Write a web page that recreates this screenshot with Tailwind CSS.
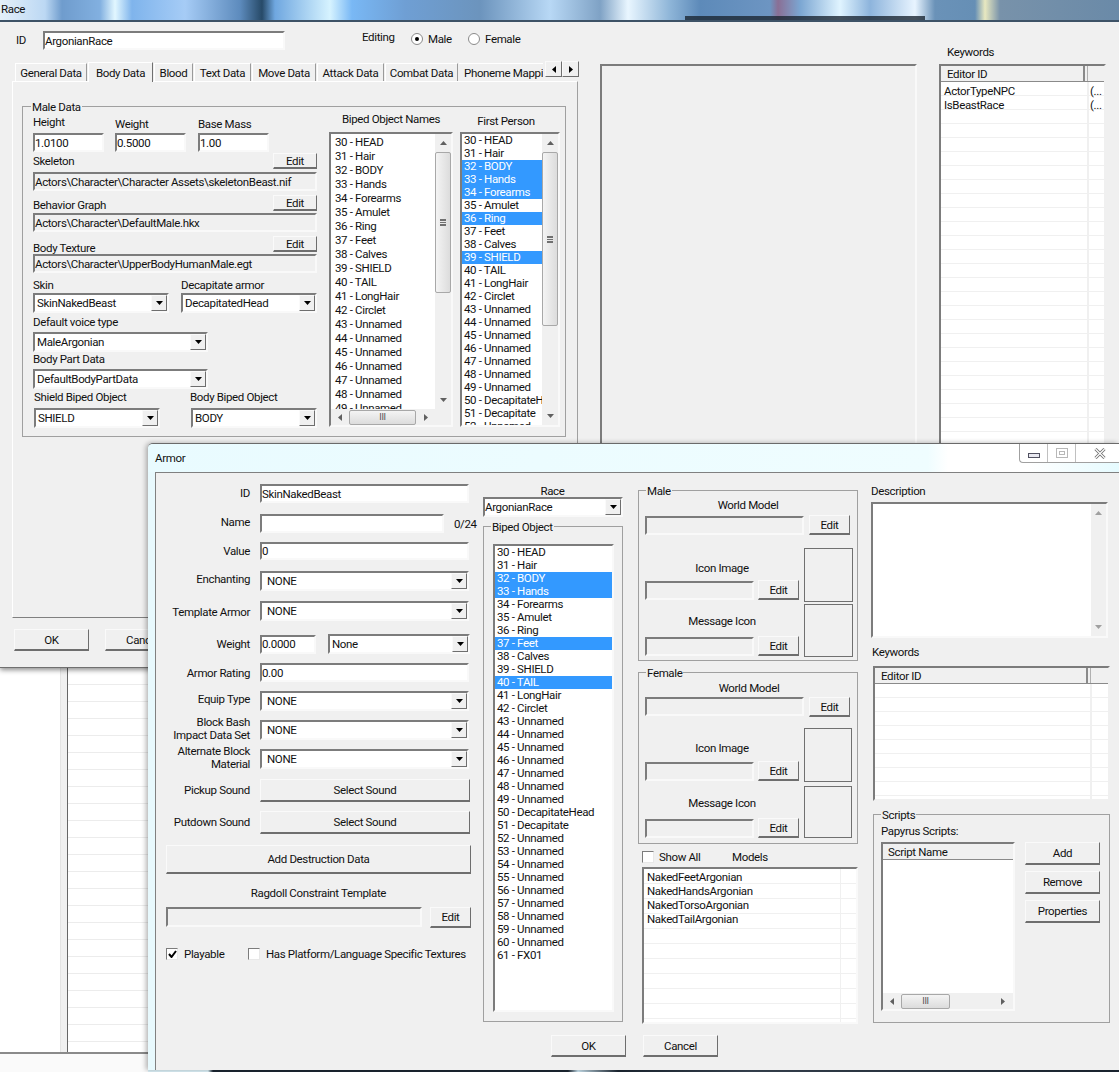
<!DOCTYPE html>
<html lang="en">
<head>
<meta charset="UTF-8">
<title>Race / Armor</title>
<script src="https://cdn.jsdelivr.net/npm/@tailwindcss/browser@4"></script>
</head>
<body class="bg-white">
<div class="relative w-[1119px] h-[1072px] overflow-hidden whitespace-nowrap bg-white text-[11.5px] tracking-[-0.35px] leading-[12px] text-[#111111] font-['Roboto','Liberation_Sans',Arial,sans-serif]">

  <!-- list window behind both dialogs -->
  <div class="absolute left-0 top-[668px] w-[148px] h-[404px] flex flex-col">
    <div class="flex h-[386px] border-b-2 border-[#8a8a8a]">
      <div class="w-[60px] bg-white"></div>
      <div class="w-[7px] bg-[#f0f0f0] border-l border-[#e4e4e4]"></div>
      <div class="flex-1 border-l border-[#666666] bg-[repeating-linear-gradient(180deg,#ffffff_0px,#ffffff_16px,#ececec_16px,#ececec_17px)]"></div>
    </div>
    <div class="flex-1 bg-[#fafafa]"></div>
  </div>
  <div class="absolute left-[148px] right-0 bottom-0 h-[2px] bg-[linear-gradient(90deg,#dff4fb_0px,#dff4fb_60px,#1c2733_65px,#1c2733_420px,#cfe8f5_430px,#1c2733_470px,#3a4654_600px,#1c2733_971px)]"></div>

  <!-- Race window -->
  <div class="absolute left-0 top-0 w-[1119px] h-[668px] bg-[#f0f0f0] border-b border-[#707070] shadow-[0_2px_5px_rgba(0,0,0,0.45)]">
    <div class="relative h-[22px] pl-px leading-[19px] border-b-2 border-[#3d5266] bg-[linear-gradient(90deg,#e4f0fa_0px,#bcd8f3_45px,#6f9ccd_62px,#82b0e0_100px,#e2f7ff_115px,#7fb4ec_132px,#a6ccf6_185px,#5d8bbd_240px,#274a68_262px,#6fa7e0_275px,#d6f3ff_330px,#79b8f5_352px,#6f9fd4_405px,#6c94bd_480px,#b8d8f5_550px,#7fa2c5_600px,#e9f6ff_628px,#8eb5d8_670px,#5d8ab9_700px,#6d95c2_770px,#8a6f95_778px,#7ba6d2_800px,#e0f4ff_840px,#8db4dc_870px,#e8f4ff_915px,#6a92b8_935px,#668fb5_975px,#e8e8c0_985px,#7892aa_1000px,#6a8aa8_1119px)]">
      Race
      <div class="absolute left-[685px] top-[16px] w-[240px] h-[4px] bg-[#1c2733]/80"></div>
    </div>
    <div class="flex">
      <!-- left part: header, tabs, buttons -->
      <div class="w-[600px] shrink-0">
        <div class="flex items-start pt-[9px] pl-[16px]">
          <span class="w-[27px] mt-[3px]">ID</span>
          <div class="w-[242px] h-[19px] flex items-center bg-white border-2 border-t-[#7c7c7c] border-l-[#7c7c7c] border-r-[#f9f9f9] border-b-[#f9f9f9]">ArgonianRace</div>
          <span class="ml-[77px] w-[49px]">Editing</span>
          <span class="mt-[2px] w-[12px] h-[12px] rounded-full bg-white border border-[#8a8a8a] flex items-center justify-center"><span class="w-[4px] h-[4px] rounded-full bg-black"></span></span>
          <span class="ml-[5px] mt-[2px] w-[40px]">Male</span>
          <span class="mt-[2px] w-[12px] h-[12px] rounded-full bg-white border border-[#8a8a8a]"></span>
          <span class="ml-[5px] mt-[2px]">Female</span>
        </div>

        <!-- tabs -->
        <div class="relative flex items-end h-[20px] mt-[11px] pl-[15px] gap-px">
          <div class="w-[72px] h-[18px] flex items-center justify-center border border-b-0 border-t-white border-l-white border-r-[#9a9a9a]">General Data</div>
          <div class="w-[65px] h-[20px] -mb-px z-10 flex items-center justify-center bg-[#f0f0f0] border border-b-0 border-t-white border-l-white border-r-[#707070]">Body Data</div>
          <div class="w-[39px] h-[18px] flex items-center justify-center border border-b-0 border-t-white border-l-white border-r-[#9a9a9a]">Blood</div>
          <div class="w-[57px] h-[18px] flex items-center justify-center border border-b-0 border-t-white border-l-white border-r-[#9a9a9a]">Text Data</div>
          <div class="w-[64px] h-[18px] flex items-center justify-center border border-b-0 border-t-white border-l-white border-r-[#9a9a9a]">Move Data</div>
          <div class="w-[67px] h-[18px] flex items-center justify-center border border-b-0 border-t-white border-l-white border-r-[#9a9a9a]">Attack Data</div>
          <div class="w-[73px] h-[18px] flex items-center justify-center border border-b-0 border-t-white border-l-white border-r-[#9a9a9a]">Combat Data</div>
          <div class="w-[84px] h-[18px] pl-[5px] flex items-center overflow-hidden border-t border-white">Phoneme Mapping</div>
          <div class="absolute left-[545px] top-0 flex">
            <span class="w-[17px] h-[16px] flex items-center justify-center bg-[#f0f0f0] border border-t-[#fafafa] border-l-[#fafafa] border-r-[#6e6e6e] border-b-[#6e6e6e]"><svg class="w-[4px] h-[7px]" viewBox="0 0 4 7"><path d="M4 0v7L0 3.5z"/></svg></span>
            <span class="w-[17px] h-[16px] flex items-center justify-center bg-[#f0f0f0] border border-t-[#fafafa] border-l-[#fafafa] border-r-[#6e6e6e] border-b-[#6e6e6e]"><svg class="w-[4px] h-[7px]" viewBox="0 0 4 7"><path d="M0 0v7l4-3.5z"/></svg></span>
          </div>
        </div>

        <!-- tab panel -->
        <div class="ml-[12px] w-[566px] h-[537px] pt-[24px] pl-[9px] border border-t-white border-l-white border-r-[#a0a0a0] border-b-[#808080]">
          <div class="relative flex w-[544px] h-[331px] border border-[#a0a0a0]">
            <span class="absolute left-[8px] -top-[6px] px-px bg-[#f0f0f0]">Male Data</span>

            <!-- data fields -->
            <div class="w-[306px] shrink-0 pl-[10px]">
              <div class="flex h-[24px] items-end">
                <span class="w-[82px] mb-[3px]">Height</span>
                <span class="w-[83px] mb-px">Weight</span>
                <span class="mb-px">Base Mass</span>
              </div>
              <div class="flex mt-[2px]">
                <div class="w-[71px] h-[19px] flex items-center bg-white border-2 border-t-[#7c7c7c] border-l-[#7c7c7c] border-r-[#f9f9f9] border-b-[#f9f9f9]">1.0100</div>
                <div class="w-[71px] h-[19px] ml-[11px] flex items-center bg-white border-2 border-t-[#7c7c7c] border-l-[#7c7c7c] border-r-[#f9f9f9] border-b-[#f9f9f9]">0.5000</div>
                <div class="w-[71px] h-[19px] ml-[12px] flex items-center bg-white border-2 border-t-[#7c7c7c] border-l-[#7c7c7c] border-r-[#f9f9f9] border-b-[#f9f9f9]">1.00</div>
              </div>
              <div class="flex justify-between items-end w-[284px] mt-px">
                <span class="mb-[2px]">Skeleton</span>
                <span class="w-[44px] h-[16px] flex items-center justify-center border border-b-2 border-t-[#fafafa] border-l-[#fafafa] border-r-[#6e6e6e] border-b-[#6e6e6e]">Edit</span>
              </div>
              <div class="w-[284px] h-[19px] mt-[3px] flex items-center border-2 border-t-[#7c7c7c] border-l-[#7c7c7c] border-r-[#f9f9f9] border-b-[#f9f9f9]">Actors\Character\Character Assets\skeletonBeast.nif</div>
              <div class="flex justify-between items-end w-[284px] mt-[4px]">
                <span>Behavior Graph</span>
                <span class="w-[44px] h-[16px] flex items-center justify-center border border-b-2 border-t-[#fafafa] border-l-[#fafafa] border-r-[#6e6e6e] border-b-[#6e6e6e]">Edit</span>
              </div>
              <div class="w-[284px] h-[19px] mt-[2px] flex items-center border-2 border-t-[#7c7c7c] border-l-[#7c7c7c] border-r-[#f9f9f9] border-b-[#f9f9f9]">Actors\Character\DefaultMale.hkx</div>
              <div class="flex justify-between w-[284px] mt-[4px] h-[16px]">
                <span class="mt-[6px]">Body Texture</span>
                <span class="w-[44px] h-[16px] flex items-center justify-center border border-b-2 border-t-[#fafafa] border-l-[#fafafa] border-r-[#6e6e6e] border-b-[#6e6e6e]">Edit</span>
              </div>
              <div class="w-[284px] h-[19px] mt-[2px] flex items-center border-2 border-t-[#7c7c7c] border-l-[#7c7c7c] border-r-[#f9f9f9] border-b-[#f9f9f9]">Actors\Character\UpperBodyHumanMale.egt</div>
              <div class="flex mt-[6px] mb-[2px]">
                <span class="w-[148px]">Skin</span>
                <span>Decapitate armor</span>
              </div>
              <div class="flex gap-[12px]">
                <div class="w-[136px] h-[20px] flex items-center pl-[2px] bg-white border-2 border-t-[#7c7c7c] border-l-[#7c7c7c] border-r-[#f9f9f9] border-b-[#f9f9f9]"><span class="flex-1">SkinNakedBeast</span><span class="w-[16px] h-[16px] flex items-center justify-center bg-[#f0f0f0] border border-t-[#fafafa] border-l-[#fafafa] border-r-[#6e6e6e] border-b-[#6e6e6e]"><svg class="w-[7px] h-[4px]" viewBox="0 0 7 4"><path d="M0 0h7L3.5 4z"/></svg></span></div>
                <div class="w-[136px] h-[20px] flex items-center pl-[2px] bg-white border-2 border-t-[#7c7c7c] border-l-[#7c7c7c] border-r-[#f9f9f9] border-b-[#f9f9f9]"><span class="flex-1">DecapitatedHead</span><span class="w-[16px] h-[16px] flex items-center justify-center bg-[#f0f0f0] border border-t-[#fafafa] border-l-[#fafafa] border-r-[#6e6e6e] border-b-[#6e6e6e]"><svg class="w-[7px] h-[4px]" viewBox="0 0 7 4"><path d="M0 0h7L3.5 4z"/></svg></span></div>
              </div>
              <div class="mt-[3px]">Default voice type</div>
              <div class="w-[175px] h-[20px] mt-[4px] flex items-center pl-[2px] bg-white border-2 border-t-[#7c7c7c] border-l-[#7c7c7c] border-r-[#f9f9f9] border-b-[#f9f9f9]"><span class="flex-1">MaleArgonian</span><span class="w-[16px] h-[16px] flex items-center justify-center bg-[#f0f0f0] border border-t-[#fafafa] border-l-[#fafafa] border-r-[#6e6e6e] border-b-[#6e6e6e]"><svg class="w-[7px] h-[4px]" viewBox="0 0 7 4"><path d="M0 0h7L3.5 4z"/></svg></span></div>
              <div class="mt-px">Body Part Data</div>
              <div class="w-[175px] h-[20px] mt-[4px] flex items-center pl-[2px] bg-white border-2 border-t-[#7c7c7c] border-l-[#7c7c7c] border-r-[#f9f9f9] border-b-[#f9f9f9]"><span class="flex-1">DefaultBodyPartData</span><span class="w-[16px] h-[16px] flex items-center justify-center bg-[#f0f0f0] border border-t-[#fafafa] border-l-[#fafafa] border-r-[#6e6e6e] border-b-[#6e6e6e]"><svg class="w-[7px] h-[4px]" viewBox="0 0 7 4"><path d="M0 0h7L3.5 4z"/></svg></span></div>
              <div class="flex mt-[2px] ml-px">
                <span class="w-[156px]">Shield Biped Object</span>
                <span>Body Biped Object</span>
              </div>
              <div class="flex gap-[31px] mt-[5px] ml-px">
                <div class="w-[126px] h-[20px] flex items-center pl-[2px] bg-white border-2 border-t-[#7c7c7c] border-l-[#7c7c7c] border-r-[#f9f9f9] border-b-[#f9f9f9]"><span class="flex-1">SHIELD</span><span class="w-[16px] h-[16px] flex items-center justify-center bg-[#f0f0f0] border border-t-[#fafafa] border-l-[#fafafa] border-r-[#6e6e6e] border-b-[#6e6e6e]"><svg class="w-[7px] h-[4px]" viewBox="0 0 7 4"><path d="M0 0h7L3.5 4z"/></svg></span></div>
                <div class="w-[126px] h-[20px] flex items-center pl-[2px] bg-white border-2 border-t-[#7c7c7c] border-l-[#7c7c7c] border-r-[#f9f9f9] border-b-[#f9f9f9]"><span class="flex-1">BODY</span><span class="w-[16px] h-[16px] flex items-center justify-center bg-[#f0f0f0] border border-t-[#fafafa] border-l-[#fafafa] border-r-[#6e6e6e] border-b-[#6e6e6e]"><svg class="w-[7px] h-[4px]" viewBox="0 0 7 4"><path d="M0 0h7L3.5 4z"/></svg></span></div>
              </div>
            </div>

            <!-- Biped Object Names -->
            <div class="w-[124px] shrink-0 pt-[6px]">
              <div class="text-center">Biped Object Names</div>
              <div class="flex flex-col h-[295px] mt-[7px] bg-white border-2 border-t-[#7c7c7c] border-l-[#7c7c7c] border-r-[#f9f9f9] border-b-[#f9f9f9]">
                <div class="flex h-[275px]">
                  <div class="flex-1 overflow-hidden pt-px pl-[4px] leading-[14px]">
                    <div>30 - HEAD</div><div>31 - Hair</div><div>32 - BODY</div><div>33 - Hands</div><div>34 - Forearms</div><div>35 - Amulet</div><div>36 - Ring</div><div>37 - Feet</div><div>38 - Calves</div><div>39 - SHIELD</div><div>40 - TAIL</div><div>41 - LongHair</div><div>42 - Circlet</div><div>43 - Unnamed</div><div>44 - Unnamed</div><div>45 - Unnamed</div><div>46 - Unnamed</div><div>47 - Unnamed</div><div>48 - Unnamed</div><div>49 - Unnamed</div>
                  </div>
                  <div class="w-[16px] flex flex-col bg-[#f0f0f0]">
                    <div class="h-[18px] flex items-center justify-center"><svg class="w-[7px] h-[4px]" viewBox="0 0 7 4"><path fill="#606060" d="M3.5 0L7 4H0z"/></svg></div>
                    <div class="h-[141px] flex items-center justify-center bg-[linear-gradient(90deg,#f4f4f4,#dcdcdc)] border border-[#a8a8a8] rounded-[2px]"><span class="w-[6px] h-[7px] border-y-2 border-[#707070] flex items-center"><span class="w-full h-px bg-[#707070]"></span></span></div>
                    <div class="flex-1"></div>
                    <div class="h-[18px] flex items-center justify-center"><svg class="w-[7px] h-[4px]" viewBox="0 0 7 4"><path fill="#606060" d="M0 0h7L3.5 4z"/></svg></div>
                  </div>
                </div>
                <div class="flex flex-1 items-center bg-[#f0f0f0] pr-[16px]">
                  <div class="w-[18px] flex justify-center"><svg class="w-[4px] h-[7px]" viewBox="0 0 4 7"><path fill="#606060" d="M4 0v7L0 3.5z"/></svg></div>
                  <div class="w-[67px] h-[15px] flex items-center justify-center bg-[linear-gradient(180deg,#f4f4f4,#dcdcdc)] border border-[#a8a8a8] rounded-[2px] text-[9px] text-[#555555]">III</div>
                  <div class="flex-1 flex justify-center"><svg class="w-[4px] h-[7px]" viewBox="0 0 4 7"><path fill="#606060" d="M0 0v7l4-3.5z"/></svg></div>
                </div>
              </div>
            </div>

            <!-- First Person -->
            <div class="w-[100px] shrink-0 ml-[7px] pt-[8px]">
              <div class="text-center pr-[8px]">First Person</div>
              <div class="flex h-[295px] mt-[5px] bg-white border-2 border-t-[#7c7c7c] border-l-[#7c7c7c] border-r-[#f9f9f9] border-b-[#f9f9f9]">
                <div class="flex-1 overflow-hidden leading-[13px]">
                  <div class="pl-[2px]">30 - HEAD</div><div class="pl-[2px]">31 - Hair</div>
                  <div class="pl-[2px] bg-[#3399ff] text-white">32 - BODY</div><div class="pl-[2px] bg-[#3399ff] text-white">33 - Hands</div><div class="pl-[2px] bg-[#3399ff] text-white">34 - Forearms</div>
                  <div class="pl-[2px]">35 - Amulet</div>
                  <div class="pl-[2px] bg-[#3399ff] text-white">36 - Ring</div>
                  <div class="pl-[2px]">37 - Feet</div><div class="pl-[2px]">38 - Calves</div>
                  <div class="pl-[2px] bg-[#3399ff] text-white">39 - SHIELD</div>
                  <div class="pl-[2px]">40 - TAIL</div><div class="pl-[2px]">41 - LongHair</div><div class="pl-[2px]">42 - Circlet</div><div class="pl-[2px]">43 - Unnamed</div><div class="pl-[2px]">44 - Unnamed</div><div class="pl-[2px]">45 - Unnamed</div><div class="pl-[2px]">46 - Unnamed</div><div class="pl-[2px]">47 - Unnamed</div><div class="pl-[2px]">48 - Unnamed</div><div class="pl-[2px]">49 - Unnamed</div><div class="pl-[2px]">50 - DecapitateHead</div><div class="pl-[2px]">51 - Decapitate</div><div class="pl-[2px]">52 - Unnamed</div>
                </div>
                <div class="w-[16px] flex flex-col bg-[#f0f0f0]">
                  <div class="h-[18px] flex items-center justify-center"><svg class="w-[7px] h-[4px]" viewBox="0 0 7 4"><path fill="#606060" d="M3.5 0L7 4H0z"/></svg></div>
                  <div class="h-[174px] flex items-center justify-center bg-[linear-gradient(90deg,#f4f4f4,#dcdcdc)] border border-[#a8a8a8] rounded-[2px]"><span class="w-[6px] h-[7px] border-y-2 border-[#707070] flex items-center"><span class="w-full h-px bg-[#707070]"></span></span></div>
                  <div class="flex-1"></div>
                  <div class="h-[18px] flex items-center justify-center"><svg class="w-[7px] h-[4px]" viewBox="0 0 7 4"><path fill="#606060" d="M0 0h7L3.5 4z"/></svg></div>
                </div>
              </div>
            </div>
          </div>
        </div>

        <div class="flex ml-[14px] mt-[11px] gap-[16px]">
          <span class="w-[75px] h-[22px] flex items-center justify-center border border-b-2 border-t-[#fafafa] border-l-[#fafafa] border-r-[#6e6e6e] border-b-[#6e6e6e]">OK</span>
          <span class="w-[75px] h-[22px] flex items-center justify-center border border-b-2 border-t-[#fafafa] border-l-[#fafafa] border-r-[#6e6e6e] border-b-[#6e6e6e]">Cancel</span>
        </div>
      </div>

      <!-- preview pane -->
      <div class="w-[317px] h-[500px] mt-[42px] shrink-0 border-2 border-t-[#7c7c7c] border-l-[#7c7c7c] border-r-[#f9f9f9] border-b-[#f9f9f9]"></div>

      <!-- keywords -->
      <div class="w-[167px] ml-[22px] shrink-0 pt-[24px]">
        <div class="pl-[8px]">Keywords</div>
        <div class="h-[500px] mt-[6px] bg-white border-2 border-t-[#7c7c7c] border-l-[#7c7c7c] border-r-[#f0f0f0] border-b-[#f9f9f9]">
          <div class="flex h-[16px] items-center bg-[#f0f0f0] border-b border-[#8a8a8a]">
            <div class="w-[144px] h-full pl-[6px] flex items-center border-r-2 border-[#8a8a8a]">Editor ID</div>
            <div class="w-[3px] h-full border-r border-[#b0b0b0]"></div>
          </div>
          <div class="flex h-full">
            <div class="w-[146px] pl-[3px] pt-[2px] leading-[14px] bg-[repeating-linear-gradient(180deg,#ffffff_0px,#ffffff_13px,#f0f0f0_13px,#f0f0f0_14px)]">
              <div>ActorTypeNPC</div><div>IsBeastRace</div>
            </div>
            <div class="flex-1 pl-[1px] pt-[2px] leading-[14px] border-l-2 border-[#f0f0f0] bg-[repeating-linear-gradient(180deg,#ffffff_0px,#ffffff_13px,#f0f0f0_13px,#f0f0f0_14px)]">
              <div>(...</div><div>(...</div>
            </div>
          </div>
        </div>
      </div>
    </div>
  </div>

  <!-- Armor window -->
  <div class="absolute left-[148px] top-[443px] w-[971px] h-[627px] flex flex-col border-t border-[#6a6a6a] rounded-tl-[5px] bg-[#e8f9fd] pl-[7px] shadow-[-2px_0_5px_rgba(0,0,0,0.3)] overflow-hidden">
    <!-- title bar -->
    <div class="relative h-[28px] -ml-[7px] pl-[7px] pt-[8px] bg-[linear-gradient(90deg,#e9fbff_0px,#effdff_780px,#ffffff_800px,#ffffff_880px,#e6fbff_971px)]">
      Armor
      <div class="absolute left-[871px] top-0 w-[100px] h-[19px] flex bg-white border-l border-b border-[#a0a0a0] rounded-bl-[4px]">
        <div class="w-[28px] border-r border-[#c0c0c0] flex items-center justify-center pt-[5px]"><span class="w-[12px] h-[5px] border border-[#505060] bg-[#e8e8f0]"></span></div>
        <div class="w-[28px] border-r border-[#c0c0c0] flex items-center justify-center"><span class="w-[12px] h-[10px] border border-[#b8b8b8] flex items-center justify-center"><span class="w-[6px] h-[4px] border border-[#b8b8b8]"></span></span></div>
        <div class="flex-1 flex items-center justify-center pl-[4px]"><svg class="w-[12px] h-[11px]" viewBox="0 0 12 11"><path d="M1.5 1l9 9M10.5 1l-9 9" fill="none" stroke="#707070" stroke-width="3"/><path d="M1.5 1l9 9M10.5 1l-9 9" fill="none" stroke="#ffffff" stroke-width="1.2"/></svg></div>
      </div>
    </div>

    <!-- dialog body -->
    <div class="flex-1 bg-[#f0f0f0] border-l border-t border-[#808080]">
      <div class="flex h-[550px]">
        <!-- form column -->
        <div class="w-[327px] shrink-0 pl-[10px]">
          <div class="flex items-center mt-[11px] h-[19px]">
            <span class="w-[84px] text-right mb-px">ID</span>
            <div class="ml-[10px] w-[209px] h-[19px] flex items-center bg-white border-2 border-t-[#7c7c7c] border-l-[#7c7c7c] border-r-[#f9f9f9] border-b-[#f9f9f9]">SkinNakedBeast</div>
          </div>
          <div class="flex items-center mt-[11px] h-[19px]">
            <span class="w-[84px] text-right mb-[3px]">Name</span>
            <div class="ml-[10px] w-[184px] h-[19px] bg-white border-2 border-t-[#7c7c7c] border-l-[#7c7c7c] border-r-[#f9f9f9] border-b-[#f9f9f9]"></div>
            <span class="ml-[10px]">0/24</span>
          </div>
          <div class="flex items-center mt-[9px] h-[18px]">
            <span class="w-[84px] text-right mb-px">Value</span>
            <div class="ml-[10px] w-[209px] h-[18px] flex items-center bg-white border-2 border-t-[#7c7c7c] border-l-[#7c7c7c] border-r-[#f9f9f9] border-b-[#f9f9f9]">0</div>
          </div>
          <div class="flex items-center mt-[11px] h-[20px]">
            <span class="w-[84px] text-right mb-[4px]">Enchanting</span>
            <div class="ml-[10px] w-[209px] h-[20px] flex items-center pl-[5px] bg-white border-2 border-t-[#7c7c7c] border-l-[#7c7c7c] border-r-[#f9f9f9] border-b-[#f9f9f9]"><span class="flex-1">NONE</span><span class="w-[16px] h-[16px] flex items-center justify-center bg-[#f0f0f0] border border-t-[#fafafa] border-l-[#fafafa] border-r-[#6e6e6e] border-b-[#6e6e6e]"><svg class="w-[7px] h-[4px]" viewBox="0 0 7 4"><path d="M0 0h7L3.5 4z"/></svg></span></div>
          </div>
          <div class="flex items-center mt-[10px] h-[20px]">
            <span class="w-[84px] text-right mt-[2px]">Template Armor</span>
            <div class="ml-[10px] w-[209px] h-[20px] flex items-center pl-[5px] bg-white border-2 border-t-[#7c7c7c] border-l-[#7c7c7c] border-r-[#f9f9f9] border-b-[#f9f9f9]"><span class="flex-1">NONE</span><span class="w-[16px] h-[16px] flex items-center justify-center bg-[#f0f0f0] border border-t-[#fafafa] border-l-[#fafafa] border-r-[#6e6e6e] border-b-[#6e6e6e]"><svg class="w-[7px] h-[4px]" viewBox="0 0 7 4"><path d="M0 0h7L3.5 4z"/></svg></span></div>
          </div>
          <div class="flex items-center mt-[13px] h-[20px]">
            <span class="w-[84px] text-right mb-px">Weight</span>
            <div class="ml-[10px] w-[56px] h-[19px] flex items-center bg-white border-2 border-t-[#7c7c7c] border-l-[#7c7c7c] border-r-[#f9f9f9] border-b-[#f9f9f9]">0.0000</div>
            <div class="ml-[12px] w-[142px] h-[20px] flex items-center pl-[2px] bg-white border-2 border-t-[#7c7c7c] border-l-[#7c7c7c] border-r-[#f9f9f9] border-b-[#f9f9f9]"><span class="flex-1">None</span><span class="w-[16px] h-[16px] flex items-center justify-center bg-[#f0f0f0] border border-t-[#fafafa] border-l-[#fafafa] border-r-[#6e6e6e] border-b-[#6e6e6e]"><svg class="w-[7px] h-[4px]" viewBox="0 0 7 4"><path d="M0 0h7L3.5 4z"/></svg></span></div>
          </div>
          <div class="flex items-center mt-[9px] h-[19px]">
            <span class="w-[84px] text-right">Armor Rating</span>
            <div class="ml-[10px] w-[209px] h-[19px] flex items-center bg-white border-2 border-t-[#7c7c7c] border-l-[#7c7c7c] border-r-[#f9f9f9] border-b-[#f9f9f9]">0.00</div>
          </div>
          <div class="flex items-center mt-[9px] h-[20px]">
            <span class="w-[84px] text-right mb-[4px]">Equip Type</span>
            <div class="ml-[10px] w-[209px] h-[20px] flex items-center pl-[5px] bg-white border-2 border-t-[#7c7c7c] border-l-[#7c7c7c] border-r-[#f9f9f9] border-b-[#f9f9f9]"><span class="flex-1">NONE</span><span class="w-[16px] h-[16px] flex items-center justify-center bg-[#f0f0f0] border border-t-[#fafafa] border-l-[#fafafa] border-r-[#6e6e6e] border-b-[#6e6e6e]"><svg class="w-[7px] h-[4px]" viewBox="0 0 7 4"><path d="M0 0h7L3.5 4z"/></svg></span></div>
          </div>
          <div class="flex items-center mt-[9px] h-[20px]">
            <span class="w-[84px] text-right leading-[13px] -mt-[2px]">Block Bash<br>Impact Data Set</span>
            <div class="ml-[10px] w-[209px] h-[20px] flex items-center pl-[5px] bg-white border-2 border-t-[#7c7c7c] border-l-[#7c7c7c] border-r-[#f9f9f9] border-b-[#f9f9f9]"><span class="flex-1">NONE</span><span class="w-[16px] h-[16px] flex items-center justify-center bg-[#f0f0f0] border border-t-[#fafafa] border-l-[#fafafa] border-r-[#6e6e6e] border-b-[#6e6e6e]"><svg class="w-[7px] h-[4px]" viewBox="0 0 7 4"><path d="M0 0h7L3.5 4z"/></svg></span></div>
          </div>
          <div class="flex items-center mt-[9px] h-[20px]">
            <span class="w-[84px] text-right leading-[13px] -mt-[2px]">Alternate Block<br>Material</span>
            <div class="ml-[10px] w-[209px] h-[20px] flex items-center pl-[5px] bg-white border-2 border-t-[#7c7c7c] border-l-[#7c7c7c] border-r-[#f9f9f9] border-b-[#f9f9f9]"><span class="flex-1">NONE</span><span class="w-[16px] h-[16px] flex items-center justify-center bg-[#f0f0f0] border border-t-[#fafafa] border-l-[#fafafa] border-r-[#6e6e6e] border-b-[#6e6e6e]"><svg class="w-[7px] h-[4px]" viewBox="0 0 7 4"><path d="M0 0h7L3.5 4z"/></svg></span></div>
          </div>
          <div class="flex items-center mt-[10px] h-[23px]">
            <span class="w-[84px] text-right mb-[2px]">Pickup Sound</span>
            <span class="ml-[10px] w-[210px] h-[23px] flex items-center justify-center border border-b-2 border-t-[#fafafa] border-l-[#fafafa] border-r-[#6e6e6e] border-b-[#6e6e6e]">Select Sound</span>
          </div>
          <div class="flex items-center mt-[9px] h-[23px]">
            <span class="w-[84px] text-right mb-[2px]">Putdown Sound</span>
            <span class="ml-[10px] w-[210px] h-[23px] flex items-center justify-center border border-b-2 border-t-[#fafafa] border-l-[#fafafa] border-r-[#6e6e6e] border-b-[#6e6e6e]">Select Sound</span>
          </div>
          <div class="w-[305px] h-[29px] mt-[11px] flex items-center justify-center border border-b-2 border-t-[#fafafa] border-l-[#fafafa] border-r-[#6e6e6e] border-b-[#6e6e6e]">Add Destruction Data</div>
          <div class="w-[305px] mt-[13px] text-center">Ragdoll Constraint Template</div>
          <div class="flex items-start mt-[8px]">
            <div class="w-[256px] h-[20px] border-2 border-t-[#7c7c7c] border-l-[#7c7c7c] border-r-[#f9f9f9] border-b-[#f9f9f9]"></div>
            <span class="ml-[8px] w-[41px] h-[21px] flex items-center justify-center border border-b-2 border-t-[#fafafa] border-l-[#fafafa] border-r-[#6e6e6e] border-b-[#6e6e6e]">Edit</span>
          </div>
          <div class="flex items-center mt-[20px] h-[12px]">
            <span class="w-[12px] h-[12px] shrink-0 flex items-center justify-center bg-white border border-[#7c7c7c] border-r-[#e8e8e8] border-b-[#e8e8e8]"><svg class="w-[9px] h-[8px]" viewBox="0 0 9 8"><path d="M1 4l2.5 3L8 1" fill="none" stroke="#000000" stroke-width="2"/></svg></span>
            <span class="ml-[6px] w-[64px]">Playable</span>
            <span class="w-[12px] h-[12px] shrink-0 bg-white border border-[#7c7c7c] border-r-[#e8e8e8] border-b-[#e8e8e8]"></span>
            <span class="ml-[6px]">Has Platform/Language Specific Textures</span>
          </div>
        </div>

        <!-- race column -->
        <div class="w-[140px] shrink-0 pt-[12px]">
          <div class="text-center pr-px">Race</div>
          <div class="w-[140px] h-[20px] flex items-center bg-white border-2 border-t-[#7c7c7c] border-l-[#7c7c7c] border-r-[#f9f9f9] border-b-[#f9f9f9]"><span class="flex-1">ArgonianRace</span><span class="w-[16px] h-[16px] flex items-center justify-center bg-[#f0f0f0] border border-t-[#fafafa] border-l-[#fafafa] border-r-[#6e6e6e] border-b-[#6e6e6e]"><svg class="w-[7px] h-[4px]" viewBox="0 0 7 4"><path d="M0 0h7L3.5 4z"/></svg></span></div>
          <div class="relative h-[496px] mt-[9px] pt-[17px] pl-[9px] border border-[#a0a0a0]">
            <span class="absolute left-[7px] -top-[6px] px-px bg-[#f0f0f0]">Biped Object</span>
            <div class="w-[121px] h-[468px] bg-white leading-[13px] overflow-hidden border-2 border-t-[#7c7c7c] border-l-[#7c7c7c] border-r-[#f9f9f9] border-b-[#f9f9f9]">
              <div class="pl-[2px]">30 - HEAD</div><div class="pl-[2px]">31 - Hair</div>
              <div class="pl-[2px] bg-[#3399ff] text-white">32 - BODY</div><div class="pl-[2px] bg-[#3399ff] text-white">33 - Hands</div>
              <div class="pl-[2px]">34 - Forearms</div><div class="pl-[2px]">35 - Amulet</div><div class="pl-[2px]">36 - Ring</div>
              <div class="pl-[2px] bg-[#3399ff] text-white">37 - Feet</div>
              <div class="pl-[2px]">38 - Calves</div><div class="pl-[2px]">39 - SHIELD</div>
              <div class="pl-[2px] bg-[#3399ff] text-white">40 - TAIL</div>
              <div class="pl-[2px]">41 - LongHair</div><div class="pl-[2px]">42 - Circlet</div><div class="pl-[2px]">43 - Unnamed</div><div class="pl-[2px]">44 - Unnamed</div><div class="pl-[2px]">45 - Unnamed</div><div class="pl-[2px]">46 - Unnamed</div><div class="pl-[2px]">47 - Unnamed</div><div class="pl-[2px]">48 - Unnamed</div><div class="pl-[2px]">49 - Unnamed</div><div class="pl-[2px]">50 - DecapitateHead</div><div class="pl-[2px]">51 - Decapitate</div><div class="pl-[2px]">52 - Unnamed</div><div class="pl-[2px]">53 - Unnamed</div><div class="pl-[2px]">54 - Unnamed</div><div class="pl-[2px]">55 - Unnamed</div><div class="pl-[2px]">56 - Unnamed</div><div class="pl-[2px]">57 - Unnamed</div><div class="pl-[2px]">58 - Unnamed</div><div class="pl-[2px]">59 - Unnamed</div><div class="pl-[2px]">60 - Unnamed</div><div class="pl-[2px]">61 - FX01</div>
            </div>
          </div>
        </div>

        <!-- models column -->
        <div class="w-[220px] shrink-0 ml-[15px] pt-[17px]">
          <div class="relative h-[171px] border border-[#a0a0a0]">
            <span class="absolute left-[7px] -top-[6px] px-px bg-[#f0f0f0]">Male</span>
            <div class="mt-[8px] text-center">World Model</div>
            <div class="flex items-start mt-[4px] ml-[6px]">
              <div class="w-[159px] h-[19px] mt-px border-2 border-t-[#7c7c7c] border-l-[#7c7c7c] border-r-[#f9f9f9] border-b-[#f9f9f9]"></div>
              <span class="ml-[5px] w-[41px] h-[20px] flex items-center justify-center border border-b-2 border-t-[#fafafa] border-l-[#fafafa] border-r-[#6e6e6e] border-b-[#6e6e6e]">Edit</span>
            </div>
            <div class="flex mt-[13px] ml-[6px]">
              <div class="w-[154px] pt-[14px]">
                <div class="text-center">Icon Image</div>
                <div class="flex items-end mt-[6px] gap-[4px]">
                  <div class="w-[109px] h-[19px] border-2 border-t-[#7c7c7c] border-l-[#7c7c7c] border-r-[#f9f9f9] border-b-[#f9f9f9]"></div>
                  <span class="w-[41px] h-[20px] flex items-center justify-center border border-b-2 border-t-[#fafafa] border-l-[#fafafa] border-r-[#6e6e6e] border-b-[#6e6e6e]">Edit</span>
                </div>
                <div class="text-center mt-[15px]">Message Icon</div>
                <div class="flex items-end mt-[9px] gap-[4px]">
                  <div class="w-[109px] h-[19px] border-2 border-t-[#7c7c7c] border-l-[#7c7c7c] border-r-[#f9f9f9] border-b-[#f9f9f9]"></div>
                  <span class="w-[41px] h-[20px] flex items-center justify-center border border-b-2 border-t-[#fafafa] border-l-[#fafafa] border-r-[#6e6e6e] border-b-[#6e6e6e]">Edit</span>
                </div>
              </div>
              <div class="ml-[5px] flex flex-col gap-[2px]">
                <div class="w-[49px] h-[54px] border border-[#707070]"></div>
                <div class="w-[49px] h-[53px] border border-[#707070]"></div>
              </div>
            </div>
          </div>

          <div class="relative h-[172px] mt-[11px] border border-[#a0a0a0]">
            <span class="absolute left-[7px] -top-[6px] px-px bg-[#f0f0f0]">Female</span>
            <div class="mt-[9px] text-center pl-[2px]">World Model</div>
            <div class="flex items-start mt-[3px] ml-[6px]">
              <div class="w-[159px] h-[19px] border-2 border-t-[#7c7c7c] border-l-[#7c7c7c] border-r-[#f9f9f9] border-b-[#f9f9f9]"></div>
              <span class="ml-[5px] w-[41px] h-[20px] flex items-center justify-center border border-b-2 border-t-[#fafafa] border-l-[#fafafa] border-r-[#6e6e6e] border-b-[#6e6e6e]">Edit</span>
            </div>
            <div class="flex mt-[11px] ml-[6px]">
              <div class="w-[154px] pt-[14px]">
                <div class="text-center">Icon Image</div>
                <div class="flex items-end mt-[7px] gap-[4px]">
                  <div class="w-[109px] h-[19px] border-2 border-t-[#7c7c7c] border-l-[#7c7c7c] border-r-[#f9f9f9] border-b-[#f9f9f9]"></div>
                  <span class="w-[41px] h-[20px] flex items-center justify-center border border-b-2 border-t-[#fafafa] border-l-[#fafafa] border-r-[#6e6e6e] border-b-[#6e6e6e]">Edit</span>
                </div>
                <div class="text-center mt-[16px]">Message Icon</div>
                <div class="flex items-end mt-[9px] gap-[4px]">
                  <div class="w-[109px] h-[19px] border-2 border-t-[#7c7c7c] border-l-[#7c7c7c] border-r-[#f9f9f9] border-b-[#f9f9f9]"></div>
                  <span class="w-[41px] h-[20px] flex items-center justify-center border border-b-2 border-t-[#fafafa] border-l-[#fafafa] border-r-[#6e6e6e] border-b-[#6e6e6e]">Edit</span>
                </div>
              </div>
              <div class="ml-[5px] flex flex-col gap-[4px]">
                <div class="w-[48px] h-[54px] border border-[#707070]"></div>
                <div class="w-[48px] h-[52px] border border-[#707070]"></div>
              </div>
            </div>
          </div>

          <div class="flex items-center h-[12px] mt-[7px] ml-[4px]">
            <span class="w-[12px] h-[12px] shrink-0 bg-white border border-[#7c7c7c] border-r-[#e8e8e8] border-b-[#e8e8e8]"></span>
            <span class="ml-[5px] w-[73px]">Show All</span>
            <span>Models</span>
          </div>
          <div class="w-[216px] h-[157px] mt-[4px] ml-[4px] flex border-2 border-t-[#7c7c7c] border-l-[#7c7c7c] border-r-[#f9f9f9] border-b-[#f9f9f9] bg-[repeating-linear-gradient(180deg,#ffffff_0px,#ffffff_14px,#f0f0f0_14px,#f0f0f0_15px)]">
            <div class="w-[197px] pl-[3px] pt-px leading-[14px] border-r border-[#f0f0f0]">
              <div>NakedFeetArgonian</div><div>NakedHandsArgonian</div><div>NakedTorsoArgonian</div><div>NakedTailArgonian</div>
            </div>
          </div>
        </div>

        <!-- right column -->
        <div class="w-[239px] shrink-0 ml-[13px] pt-[12px]">
          <div>Description</div>
          <div class="w-[237px] h-[136px] mt-[5px] flex bg-white border-2 border-t-[#7c7c7c] border-l-[#7c7c7c] border-r-[#f9f9f9] border-b-[#f9f9f9]">
            <div class="flex-1"></div>
            <div class="w-[15px] flex flex-col items-center justify-between py-[7px] bg-[#f0f0f0]">
              <svg class="w-[7px] h-[4px]" viewBox="0 0 7 4"><path fill="#a0a0a0" d="M3.5 0L7 4H0z"/></svg>
              <svg class="w-[7px] h-[4px]" viewBox="0 0 7 4"><path fill="#a0a0a0" d="M0 0h7L3.5 4z"/></svg>
            </div>
          </div>
          <div class="mt-[8px] ml-px">Keywords</div>
          <div class="w-[237px] h-[135px] mt-[8px] ml-[2px] bg-white border-2 border-t-[#7c7c7c] border-l-[#7c7c7c] border-r-[#f0f0f0] border-b-[#f0f0f0]">
            <div class="flex h-[16px] bg-[#f0f0f0] border-b border-[#8a8a8a]">
              <div class="w-[213px] h-full pl-[6px] flex items-center border-r-2 border-[#8a8a8a]">Editor ID</div>
              <div class="w-[3px] h-full border-r border-[#b0b0b0]"></div>
            </div>
            <div class="flex h-[115px] overflow-hidden">
              <div class="w-[215px] bg-[repeating-linear-gradient(180deg,#ffffff_0px,#ffffff_13px,#f0f0f0_13px,#f0f0f0_14px)]"></div>
              <div class="flex-1 border-l-2 border-[#f0f0f0] bg-[repeating-linear-gradient(180deg,#ffffff_0px,#ffffff_13px,#f0f0f0_13px,#f0f0f0_14px)]"></div>
            </div>
          </div>
          <div class="relative w-[237px] h-[209px] mt-[13px] ml-[2px] border border-[#a0a0a0]">
            <span class="absolute left-[7px] -top-[6px] px-px bg-[#f0f0f0]">Scripts</span>
            <div class="mt-[10px] ml-[7px]">Papyrus Scripts:</div>
            <div class="flex mt-[5px] ml-[7px]">
              <div class="w-[134px] h-[169px] flex flex-col bg-white border-2 border-t-[#7c7c7c] border-l-[#7c7c7c] border-r-[#f9f9f9] border-b-[#f9f9f9]">
                <div class="h-[16px] pl-[5px] flex items-center bg-[#f0f0f0] border-b border-[#8a8a8a]">Script Name</div>
                <div class="flex-1"></div>
                <div class="h-[16px] flex items-center bg-[#f0f0f0]">
                  <div class="w-[18px] flex justify-center"><svg class="w-[4px] h-[7px]" viewBox="0 0 4 7"><path fill="#606060" d="M4 0v7L0 3.5z"/></svg></div>
                  <div class="w-[49px] h-[15px] flex items-center justify-center bg-[linear-gradient(180deg,#f4f4f4,#dcdcdc)] border border-[#a8a8a8] rounded-[2px] text-[9px] text-[#555555]">III</div>
                  <div class="flex-1 flex justify-end pr-[8px]"><svg class="w-[4px] h-[7px]" viewBox="0 0 4 7"><path fill="#606060" d="M0 0v7l4-3.5z"/></svg></div>
                </div>
              </div>
              <div class="ml-[10px] flex flex-col gap-[6px]">
                <span class="w-[75px] h-[23px] flex items-center justify-center border border-b-2 border-t-[#fafafa] border-l-[#fafafa] border-r-[#6e6e6e] border-b-[#6e6e6e]">Add</span>
                <span class="w-[75px] h-[23px] flex items-center justify-center border border-b-2 border-t-[#fafafa] border-l-[#fafafa] border-r-[#6e6e6e] border-b-[#6e6e6e]">Remove</span>
                <span class="w-[75px] h-[23px] flex items-center justify-center border border-b-2 border-t-[#fafafa] border-l-[#fafafa] border-r-[#6e6e6e] border-b-[#6e6e6e]">Properties</span>
              </div>
            </div>
          </div>
        </div>
      </div>

      <div class="flex mt-[12px] ml-[395px] gap-[17px]">
        <span class="w-[75px] h-[22px] flex items-center justify-center border border-b-2 border-t-[#fafafa] border-l-[#fafafa] border-r-[#6e6e6e] border-b-[#6e6e6e]">OK</span>
        <span class="w-[75px] h-[22px] flex items-center justify-center border border-b-2 border-t-[#fafafa] border-l-[#fafafa] border-r-[#6e6e6e] border-b-[#6e6e6e]">Cancel</span>
      </div>
    </div>
  </div>
</div>
</body>
</html>
